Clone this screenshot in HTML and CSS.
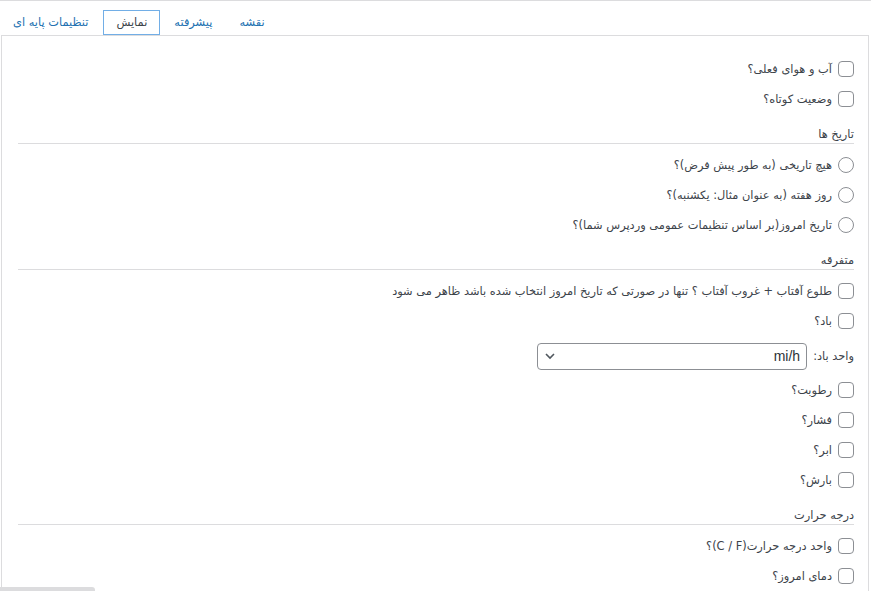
FILE: index.html
```html
<!DOCTYPE html>
<html lang="fa">
<head>
<meta charset="utf-8">
<title>تنظیمات</title>
<link rel="stylesheet" href="styles.css">
</head>
<body>
<div class="page">
  <nav class="tabs">
    <a class="tab">تنظیمات پایه ای</a>
    <a class="tab active">نمایش</a>
    <a class="tab">پیشرفته</a>
    <a class="tab">نقشه</a>
  </nav>
  <div class="panel" dir="rtl">
    <label class="row"><span class="box"></span><span>آب و هوای فعلی؟</span></label>
    <label class="row"><span class="box"></span><span>وضعیت کوتاه؟</span></label>

    <div class="heading">تاریخ ها</div>
    <label class="row"><span class="radio"></span><span>هیچ تاریخی (به طور پیش فرض)؟</span></label>
    <label class="row"><span class="radio"></span><span>روز هفته (به عنوان مثال: یکشنبه)؟</span></label>
    <label class="row"><span class="radio"></span><span>تاریخ امروز(بر اساس تنظیمات عمومی وردپرس شما)؟</span></label>

    <div class="heading">متفرقه</div>
    <label class="row"><span class="box"></span><span>طلوع آفتاب + غروب آفتاب ؟ تنها در صورتی که تاریخ امروز انتخاب شده باشد ظاهر می شود</span></label>
    <label class="row"><span class="box"></span><span>باد؟</span></label>
    <div class="row select-row">
      <span>واحد باد:</span>
      <div class="select"><span class="select-value">mi/h</span>
        <svg class="chev" width="12" height="8" viewBox="0 0 12 8"><path d="M2 2 L6 6 L10 2" fill="none" stroke="#50575e" stroke-width="1.6"/></svg>
      </div>
    </div>
    <label class="row"><span class="box"></span><span>رطوبت؟</span></label>
    <label class="row"><span class="box"></span><span>فشار؟</span></label>
    <label class="row"><span class="box"></span><span>ابر؟</span></label>
    <label class="row"><span class="box"></span><span>بارش؟</span></label>

    <div class="heading">درجه حرارت</div>
    <label class="row"><span class="box"></span><span>واحد درجه حرارت(C / F)؟</span></label>
    <label class="row"><span class="box"></span><span>دمای امروز؟</span></label>
  </div>
</div>
<div class="scroll-thumb"></div>
</body>
</html>
```

FILE: styles.css
```css
html, body {
  margin: 0;
  padding: 0;
  background: #fff;
  overflow: hidden;
}
body {
  font-family: "DejaVu Sans", Tahoma, sans-serif;
  font-size: 11.4px;
  color: #3c434a;
  height: 591px;
}
.page {
  border-top: 1px solid #dcdcde;
  padding-top: 9px;
}
.tabs {
  display: flex;
  gap: 1px;
  direction: ltr;
  height: 25px;
}
.tab {
  display: flex;
  align-items: center;
  padding: 0 12px;
  border: 1px solid transparent;
  border-bottom: none;
  color: #2271b1;
  line-height: 1;
}
.tab.active {
  border-color: #72aee6;
  border-bottom: 1px solid #72aee6;
  color: #3c434a;
  margin-left: 1px;
}
.panel {
  box-sizing: border-box;
  margin-left: 1px;
  width: 868px;
  height: 560px;
  border: 1px solid #dcdcde;
  border-bottom: none;
  padding: 18px 14px 0 16px;
}
.row {
  display: flex;
  align-items: center;
  gap: 6px;
  height: 30px;
}
.box, .radio {
  width: 14px;
  height: 14px;
  border: 1px solid #8c8f94;
  border-radius: 4px;
  background: #fff;
  flex: none;
}
.radio {
  border-radius: 50%;
}
.heading {
  margin-top: 11px;
  margin-bottom: 6px;
  padding-top: 1px;
  line-height: 17px;
  border-bottom: 1px solid #dcdcde;
}
.select-row {
  height: 39px;
  padding-top: 1px;
  box-sizing: border-box;
}
.select {
  width: 270px;
  height: 27px;
  box-sizing: border-box;
  border: 1px solid #8c8f94;
  border-radius: 4px;
  display: flex;
  align-items: center;
  justify-content: space-between;
  padding: 0 6px 0 6px;
  direction: rtl;
}
.select-value {
  font-family: "Liberation Sans", Arial, sans-serif;
  font-size: 14px;
  color: #2c3338;
}
.chev {
  display: block;
}
.scroll-thumb {
  position: fixed;
  left: 0;
  bottom: 0;
  width: 95px;
  height: 4px;
  background: #dcdcde;
  border-radius: 0 3px 0 0;
}
```
